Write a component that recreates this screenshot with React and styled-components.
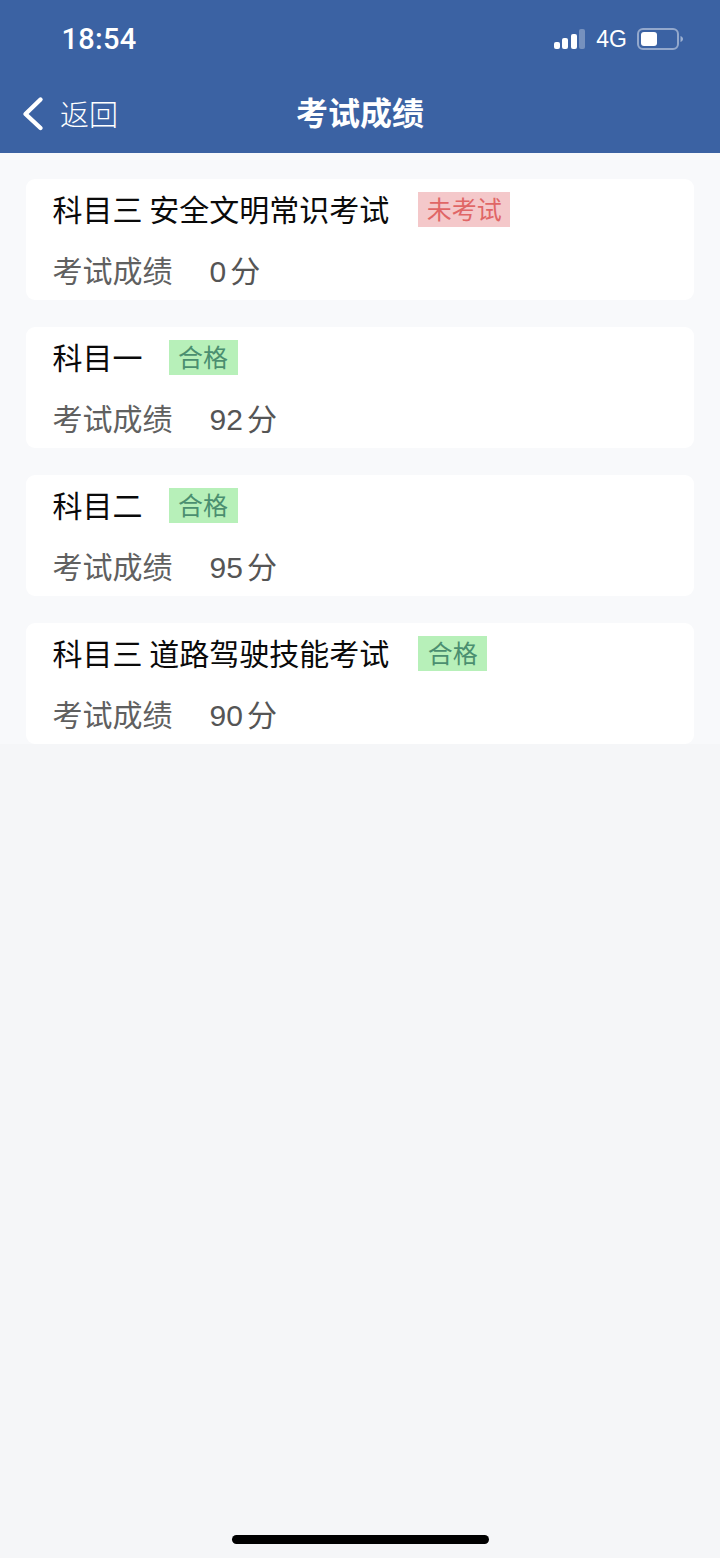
import React from "react";
import styled, { createGlobalStyle } from "styled-components";

const Global = createGlobalStyle`
  html, body { margin: 0; padding: 0; background: #f5f6f8; }
  body { font-family: "Noto Sans CJK SC", "Liberation Sans", sans-serif; }
  * { box-sizing: border-box; }
`;

const Page = styled.div`
  width: 720px;
  height: 1558px;
  display: flex;
  flex-direction: column;
  background: #f5f6f8;
  overflow: hidden;
`;

const Header = styled.header`
  height: 153px;
  background: #3b62a3;
  color: #fff;
  display: flex;
  flex-direction: column;
`;

const StatusBar = styled.div`
  height: 78px;
  padding: 0 36px 0 61.5px;
  display: flex;
  align-items: center;
  justify-content: space-between;
`;

const Time = styled.span`
  font-family: Roboto, "Liberation Sans", sans-serif;
  font-size: 29px;
  font-weight: 500;
  letter-spacing: 0.3px;
`;

const StatusIcons = styled.div`
  display: flex;
  align-items: center;
  gap: 10px;
`;

const Network = styled.span`
  font-family: "Liberation Sans", sans-serif;
  font-size: 23px;
`;

const NavBar = styled.nav`
  flex: 1;
  position: relative;
  display: flex;
  align-items: center;
  justify-content: center;
  padding-bottom: 9px;
`;

const Back = styled.div`
  position: absolute;
  left: 22px;
  top: 18px;
  display: flex;
  align-items: center;
  gap: 16px;
  font-size: 29px;
  line-height: 36px;
  font-weight: 300;
`;

const BackLabel = styled.span`
  position: relative;
  top: -1px;
`;

const NavTitle = styled.h1`
  margin: 0;
  font-size: 32px;
  line-height: 40px;
  font-weight: 700;
`;

const List = styled.main`
  height: 591px;
  background: #f8f9fb;
  padding: 26px 26px 0;
  display: flex;
  flex-direction: column;
  gap: 27px;
`;

const Card = styled.section`
  height: 121px;
  background: #fff;
  border-radius: 9px;
  padding: 12px 26.5px 0;
`;

const TitleRow = styled.div`
  display: flex;
  align-items: center;
  height: 36px;
`;

const Title = styled.span`
  font-size: 30px;
  line-height: 36px;
  color: #0a0a0a;
  white-space: pre;
  padding-bottom: 3px;
`;

const Tag = styled.span`
  margin-left: ${(p) => (p.$afterLong ? "29px" : "26px")};
  min-width: 69px;
  height: 35px;
  padding: 0 8.5px;
  text-align: center;
  font-size: 25px;
  line-height: 33px;
  background: ${(p) => (p.$pass ? "#b7f0b9" : "#f4c8ca")};
  color: ${(p) => (p.$pass ? "#4b8f70" : "#e06666")};
`;

const ScoreRow = styled.div`
  margin-top: 24px;
  display: flex;
  align-items: center;
  height: 36px;
  font-size: 30px;
  line-height: 36px;
  color: #555;
`;

const Label = styled.span`
  width: 157px;
  color: #606060;
`;

const Value = styled.span`
  padding-top: 3px;
`;

const Digits = styled.span`
  font-family: "Liberation Sans", sans-serif;
  margin-right: 4px;
`;

const Rest = styled.div`
  flex: 1;
  position: relative;
`;

const HomeBar = styled.div`
  position: absolute;
  left: 232px;
  bottom: 14px;
  width: 257px;
  height: 9px;
  border-radius: 5px;
  background: #000;
`;

const data = [
  { title: "科目三 安全文明常识考试", tag: "未考试", pass: false, score: "0" },
  { title: "科目一", tag: "合格", pass: true, score: "92" },
  { title: "科目二", tag: "合格", pass: true, score: "95" },
  { title: "科目三 道路驾驶技能考试", tag: "合格", pass: true, score: "90" },
];

export default function App() {
  return (
    <Page>
      <Global />
      <Header>
        <StatusBar>
          <Time>18:54</Time>
          <StatusIcons>
            <svg width="33" height="22" viewBox="0 0 33 22">
              <rect x="1" y="14" width="6" height="7" rx="2" fill="#fff" />
              <rect x="9" y="10" width="6" height="11" rx="2" fill="#fff" />
              <rect x="18" y="6" width="6" height="15" rx="2" fill="#fff" />
              <rect x="26" y="1" width="6" height="20" rx="2" fill="#fff" opacity="0.3" />
            </svg>
            <Network>4G</Network>
            <svg width="47" height="22" viewBox="0 0 47 22">
              <rect x="1" y="1" width="40" height="20" rx="5" fill="none" stroke="#fff" strokeOpacity="0.45" strokeWidth="2" />
              <rect x="4" y="4" width="16" height="14" rx="3" fill="#fff" />
              <path d="M43.5 8c1.5.6 2.5 1.600 2.500 3s-1 2.400-2.500 3z" fill="#fff" fillOpacity="0.5" />
            </svg>
          </StatusIcons>
        </StatusBar>
        <NavBar>
          <Back>
            <svg width="22" height="36" viewBox="0 0 22 36">
              <path d="M18.500 3.500 3.500 18l15 14" fill="none" stroke="#fff" strokeWidth="4.400" strokeLinecap="round" strokeLinejoin="round" />
            </svg>
            <BackLabel>返回</BackLabel>
          </Back>
          <NavTitle>考试成绩</NavTitle>
        </NavBar>
      </Header>
      <List>
        {data.map((d) => (
          <Card key={d.title}>
            <TitleRow>
              <Title>{d.title}</Title>
              <Tag $pass={d.pass} $afterLong={d.title.length > 3}>{d.tag}</Tag>
            </TitleRow>
            <ScoreRow>
              <Label>考试成绩</Label>
              <Value>
                <Digits>{d.score}</Digits>分
              </Value>
            </ScoreRow>
          </Card>
        ))}
      </List>
      <Rest>
        <HomeBar />
      </Rest>
    </Page>
  );
}
